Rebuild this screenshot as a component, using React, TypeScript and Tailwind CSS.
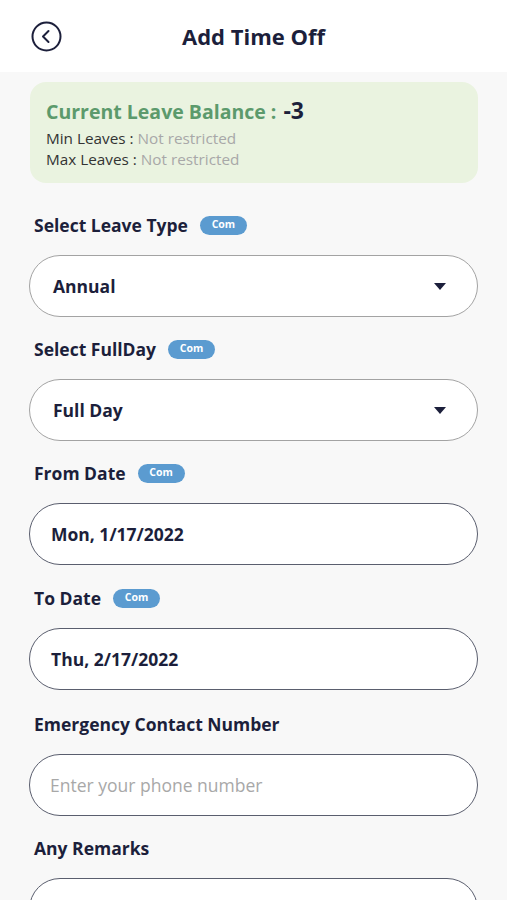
import React from 'react';

// Field label with optional "Com" badge
const FieldLabel: React.FC<{ text: string; badge?: boolean }> = ({ text, badge }) => (
  <div className="flex items-center h-6 pl-[5px]">
    <span className="text-[17.5px] font-bold text-[#1c1f3b] leading-6">{text}</span>
    {badge && (
      <span className="ml-3 h-[19px] w-[47px] rounded-full bg-[#5b9bd0] text-white text-[10.5px] font-bold flex items-center justify-center">
        Com
      </span>
    )}
  </div>
);

const Caret = () => (
  <svg width="12" height="7" viewBox="0 0 12 7" className="mr-[31px]">
    <path d="M0 0 L12 0 L6 7 Z" fill="#1c1f3b" />
  </svg>
);

const SelectBox: React.FC<{ value: string }> = ({ value }) => (
  <div className="mt-[18px] h-[62px] rounded-full border border-[#a3a3a3] bg-white flex items-center justify-between pl-[23px]">
    <span className="text-[17.5px] font-bold text-[#1c1f3b]">{value}</span>
    <Caret />
  </div>
);

const DateBox: React.FC<{ value: string }> = ({ value }) => (
  <div className="mt-[18px] h-[62px] rounded-full border border-[#5a5e6e] bg-white flex items-center pl-[21px]">
    <span className="text-[17.5px] font-bold text-[#1c1f3b]">{value}</span>
  </div>
);

export default function App() {
  return (
    <div className="w-[507px] h-[900px] overflow-hidden bg-[#f8f8f8]" style={{ fontFamily: '"Open Sans", sans-serif' }}>
      {/* Header */}
      <div className="h-[72px] bg-white flex items-center relative">
        <button className="ml-[31px]" aria-label="Back">
          <svg width="31" height="31" viewBox="0 0 31 31">
            <circle cx="15.5" cy="15.5" r="14" fill="none" stroke="#1c1f3b" strokeWidth="2" />
            <path d="M17.5 10 L12 15.5 L17.5 21" fill="none" stroke="#1c1f3b" strokeWidth="2" strokeLinecap="round" strokeLinejoin="round" />
          </svg>
        </button>
        <h1 className="absolute left-0 right-0 text-center text-[22px] font-bold text-[#1c1f3b] pointer-events-none">
          Add Time Off
        </h1>
      </div>

      <div className="pl-[29px] pr-[29px]">
        {/* Balance card */}
        <div className="mt-[10px] ml-[1px] rounded-2xl bg-[#eaf3e0] pl-4 pt-[14px] pb-[13px]">
          <div className="flex items-center h-8 leading-none">
            <span className="text-[19.5px] font-bold text-[#5c9a6c]">Current Leave Balance :</span>
            <span className="ml-[7px] text-[23px] font-bold text-[#1c1f3b] -mt-[3px]">-3</span>
          </div>
          <div className="text-[15.3px] leading-[21px] text-[#333]">
            Min Leaves : <span className="text-[#a8a8a8]">Not restricted</span>
          </div>
          <div className="text-[15.3px] leading-[21px] text-[#333]">
            Max Leaves : <span className="text-[#a8a8a8]">Not restricted</span>
          </div>
        </div>

        <div className="mt-[30px] flex flex-col gap-5">
          <div>
            <FieldLabel text="Select Leave Type" badge />
            <SelectBox value="Annual" />
          </div>
          <div>
            <FieldLabel text="Select FullDay" badge />
            <SelectBox value="Full Day" />
          </div>
          <div>
            <FieldLabel text="From Date" badge />
            <DateBox value="Mon, 1/17/2022" />
          </div>
          <div className="mt-[1px]">
            <FieldLabel text="To Date" badge />
            <DateBox value="Thu, 2/17/2022" />
          </div>
          <div className="mt-[2px]">
            <FieldLabel text="Emergency Contact Number" />
            <input
              className="mt-[18px] h-[62px] w-full rounded-full border border-[#5a5e6e] bg-white pl-[20px] text-[17.5px] text-[#1c1f3b] placeholder:text-[#a8a8a8] outline-none"
              placeholder="Enter your phone number"
            />
          </div>
          <div>
            <FieldLabel text="Any Remarks" />
            <div className="mt-[18px] h-[62px] rounded-[31px] border border-[#5a5e6e] bg-white" />
          </div>
        </div>
      </div>
    </div>
  );
}
